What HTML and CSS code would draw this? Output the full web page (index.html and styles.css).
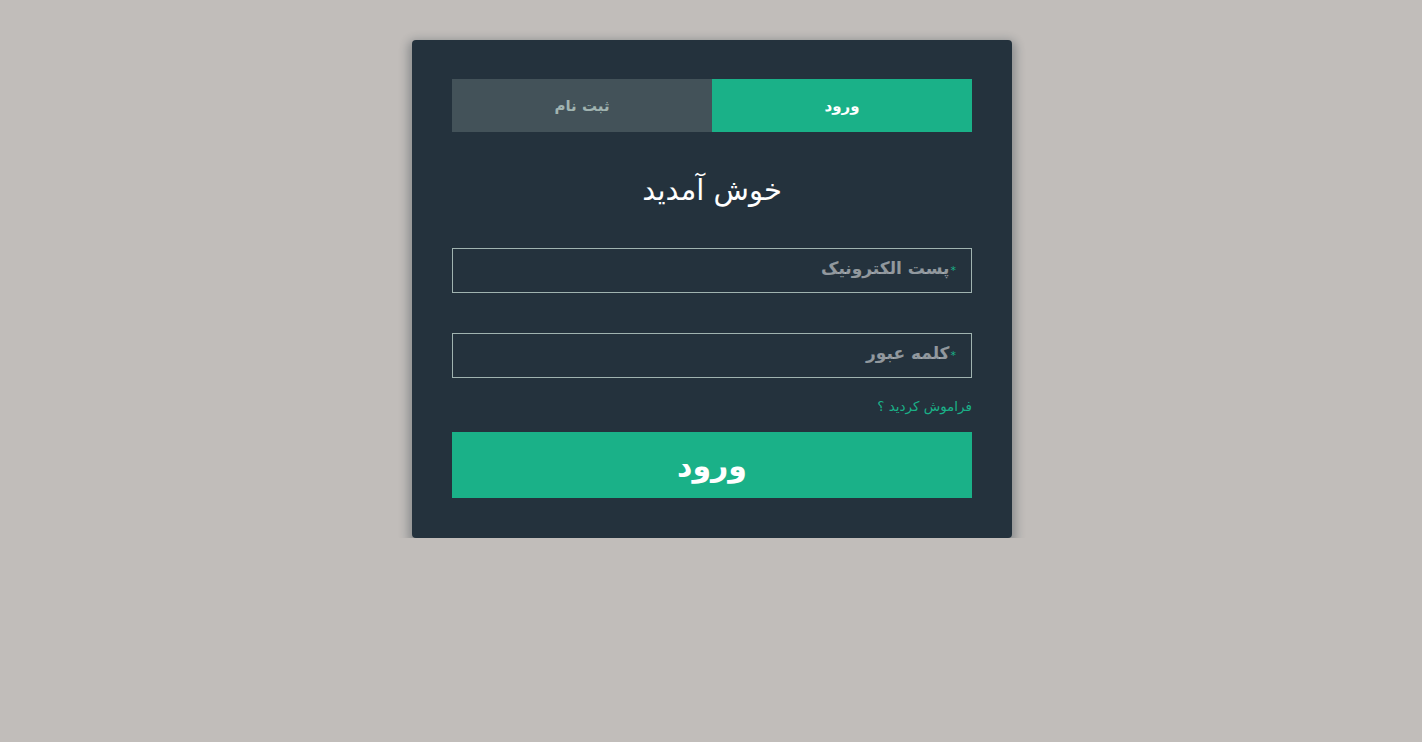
FILE: index.html
```html
<!DOCTYPE html>
<html lang="fa" dir="rtl">
<head>
<meta charset="utf-8">
<title>ورود</title>
<link rel="stylesheet" href="styles.css">
</head>
<body>
<div class="form">
  <ul class="tab-group">
    <li class="tab active">ورود</li>
    <li class="tab">ثبت نام</li>
  </ul>
  <h1 class="title">خوش آمدید</h1>
  <div class="field">
    <label class="label"><span class="req">*</span>پست الکترونیک</label>
    <input class="input" type="email">
  </div>
  <div class="field">
    <label class="label"><span class="req">*</span>کلمه عبور</label>
    <input class="input" type="password">
  </div>
  <p class="forgot"><a href="#">فراموش کردید ؟</a></p>
  <button class="button">ورود</button>
</div>
</body>
</html>
```

FILE: styles.css
```css
* { box-sizing: border-box; }
html, body { margin: 0; padding: 0; }
body {
  background: #c1bdba;
  font-family: "DejaVu Sans", "Noto Sans", sans-serif;
  padding: 40px 0 0 2px;
}
.form {
  width: 600px;
  margin: 0 auto;
  padding: 39px 40px 40px;
  background: #24323d;
  border-radius: 4px;
  box-shadow: 0 4px 10px 4px rgba(19, 35, 47, 0.3);
}
.tab-group {
  list-style: none;
  margin: 0 0 40px;
  padding: 0;
  display: flex;
}
.tab {
  flex: 1;
  height: 53px;
  display: flex;
  align-items: center;
  justify-content: center;
  background: #435259;
  color: #a0b3b0;
  font-size: 15px;
  font-weight: bold;
}
.tab.active {
  background: #1ab188;
  color: #ffffff;
}
.title {
  margin: 0 0 40px;
  height: 36px;
  line-height: 36px;
  text-align: center;
  color: #ffffff;
  font-size: 29px;
  font-weight: normal;
}
.field {
  position: relative;
  margin-bottom: 40px;
}
.field + .field { margin-bottom: 0; }
.input {
  display: block;
  width: 100%;
  height: 45px;
  margin: 0;
  background: transparent;
  border: 1px solid #a0b3b0;
  border-radius: 0;
  color: #fff;
  font-size: 20px;
  padding: 5px 10px;
  outline: none;
}
.label {
  position: absolute;
  right: 16px;
  top: 0;
  height: 45px;
  line-height: 40px;
  color: rgba(255, 255, 255, 0.5);
  font-size: 17px;
  font-weight: bold;
  pointer-events: none;
}
.req {
  color: #1ab188;
  font-size: 11px;
  font-weight: normal;
  margin-left: 1px;
  vertical-align: top;
  position: relative;
  top: 3px;
}
.forgot {
  margin: 17px 0 15px;
  text-align: right;
  font-size: 13.5px;
  line-height: 22px;
}
.forgot a {
  color: #1ab188;
  text-decoration: none;
}
.button {
  display: block;
  width: 100%;
  height: 66px;
  border: 0;
  border-radius: 0;
  background: #1ab188;
  color: #ffffff;
  font-family: "DejaVu Sans", "Noto Sans", sans-serif;
  font-size: 30px;
  font-weight: bold;
  cursor: pointer;
}
```
